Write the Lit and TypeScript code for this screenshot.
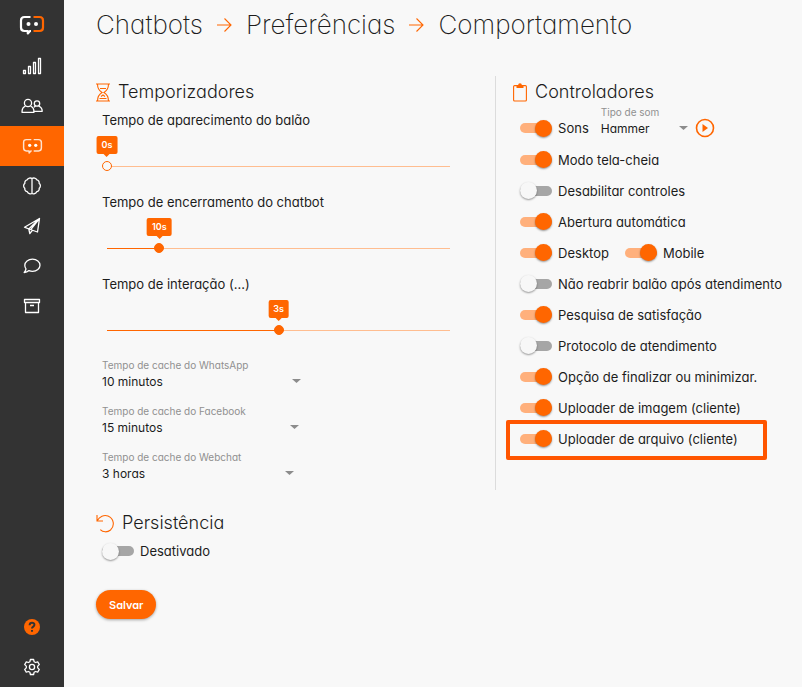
import { LitElement, html, svg, css } from "lit";
import { customElement, property } from "lit/decorators.js";
import { classMap } from "lit/directives/class-map.js";
import { styleMap } from "lit/directives/style-map.js";

const bot = svg`
  <path d="M11.500 2H5.500Q2 2 2 5.500V12.500Q2 16 5.500 16H8.800V18.500L11 16H12"/>
  <path class="half" d="M14.500 2H20.500Q24 2 24 5.500V12.500Q24 16 20.500 16H14.500"/>
  <circle class="eye" cx="9.500" cy="9" r="2"/><circle class="eye" cx="17" cy="9" r="2"/>`;

const logo = html`<svg class="logo" width="26" height="21" viewBox="0 0 26 21" aria-hidden="true">${bot}</svg>`;

const icons = {
  stats: html`<svg width="20" height="18" viewBox="0 0 20 18" aria-hidden="true">
    <path d="M1.500 13.500h2v3h-2zM6.500 9.500h2v7h-2zM11.500 5.500h2v11h-2zM16.500 1.500h2v15h-2z"/></svg>`,
  people: html`<svg width="22" height="16" viewBox="0 0 22 16" aria-hidden="true">
    <circle cx="7" cy="5" r="3.600"/><path d="M4.500 8.200C2 9 1 11 1 14.300H13C13 11 12 9 9.500 8.200"/>
    <circle cx="16" cy="5.500" r="2.700"/><path d="M13 9.200L14.500 8M12.500 13.300H21.200C21.200 10.500 20 8.900 17.800 8.100"/></svg>`,
  bot: html`<svg class="small-bot" width="21" height="17" viewBox="0 0 26 21" aria-hidden="true">${bot}</svg>`,
  brain: html`<svg width="20" height="18" viewBox="0 0 20 18" aria-hidden="true">
    <path d="M10 1.500V16.500M10 1.500C8.500.6 6 1 5.200 2.800C3.500 3 2.500 4.800 2.900 6.200C1.200 7.500 1.200 10 2.800 11.300C2.500 13 3.800 14.500 5.300 14.700C6.200 16.800 8.500 17.300 10 16.500C11.500 17.300 13.800 16.800 14.700 14.700C16.200 14.500 17.500 13 17.200 11.300C18.800 10 18.800 7.500 17.100 6.200C17.500 4.800 16.500 3 14.800 2.800C14 1 11.500.6 10 1.500Z"/></svg>`,
  plane: html`<svg width="18" height="18" viewBox="0 0 18 18" aria-hidden="true">
    <path d="M16.500 1.500L1.500 10.200L5.800 12L14.500 15L16.500 1.500ZM16.500 1.500L5.800 12L6.800 16.500L9.400 13.300M16.500 1.500L7.700 12.700"/></svg>`,
  chat: html`<svg width="18" height="16" viewBox="0 0 18 16" aria-hidden="true">
    <path d="M9.500 1.200C13.800 1.200 17 3.900 17 7.300S13.800 13.300 9.500 13.300C8.200 13.300 7 13 6 12.600C4.700 13.800 3 14.500 1.200 14.500C2.200 13.400 2.900 12.200 3 10.900C2.200 9.900 1.800 8.700 1.800 7.300C1.800 3.900 5.200 1.200 9.500 1.200Z"/></svg>`,
  archive: html`<svg width="18" height="16" viewBox="0 0 18 16" aria-hidden="true">
    <path d="M1.500 1.500H16.500V4.500H1.500ZM2.500 4.500V14.500H15.500V4.500M7 7.500H11"/></svg>`,
  help: html`<svg class="help" width="16" height="16" viewBox="0 0 16 16" aria-hidden="true">
    <circle cx="8" cy="8" r="8"/><path d="M5.600 6.200C5.700 3 10.600 3.100 10.400 6C10.300 7.600 8 7.600 8 9.400M8 11V12.800"/></svg>`,
  gear: html`<svg width="18" height="18" viewBox="0 0 18 18" aria-hidden="true">
    <circle cx="9" cy="9" r="2.600"/>
    <path d="M7.400 1.500H10.600L11.100 3.700L12.600 4.500L14.700 3.800L16.300 6.600L14.700 8.100V9.900L16.300 11.400L14.700 14.200L12.600 13.500L11.100 14.300L10.600 16.500H7.400L6.900 14.300L5.400 13.500L3.300 14.200L1.700 11.400L3.300 9.900V8.100L1.700 6.600L3.300 3.800L5.400 4.500L6.900 3.700Z"/></svg>`,
};

const arrowIcon = html`<svg class="line" width="15" height="16" viewBox="0 0 15 16" aria-hidden="true"><path d="M0 8H14M7.500 1.500L14 8L7.500 14.500"/></svg>`;
const hourglass = html`<svg class="line" width="14" height="19" viewBox="0 0 14 19" aria-hidden="true">
  <path d="M0 1H14M0 18H14M1.500 1C1.500 6 3.500 8 6 9.500C3.500 11 1.500 13 1.500 18M12.500 1C12.500 6 10.500 8 8 9.500C10.500 11 12.500 13 12.500 18M4 5.500H10M3.500 15.500H10.500M5 13.500L7 12L9 13.500"/></svg>`;
const clipboard = html`<svg class="line" width="14" height="19" viewBox="0 0 14 19" aria-hidden="true">
  <rect x="0.600" y="2.600" width="12.800" height="15.400" rx="1"/><path class="solid" d="M3.500 5V2.500H5Q5.200.3 7 .3T9 2.500H10.500V5Z"/></svg>`;
const undo = html`<svg class="line" width="18" height="19" viewBox="0 0 18 19" aria-hidden="true">
  <path d="M1 1V7H7M1 7C3.500 2.500 8 .5 12 2C18 4.500 19 12 14.500 16C11.500 18.500 7 18.500 4.300 15.600"/></svg>`;

const sharedText = css`
  :host {
    --accent: #ff6600;
    --ink: #1c1c1c;
  }
  label {
    color: var(--ink);
  }
`;

@customElement("toggle-switch")
class ToggleSwitch extends LitElement {
  @property() label = "";
  @property({ type: Boolean }) on = false;

  static styles = [
    sharedText,
    css`
      :host {
        display: flex;
      }
      .toggle {
        display: flex;
        align-items: center;
        gap: 6px;
        height: 24px;
        font-size: 13px;
        white-space: nowrap;
      }
      .box {
        appearance: none;
        display: grid;
        align-items: center;
        width: 32px;
        height: 18px;
        margin: 0;
        cursor: pointer;
      }
      .box::before,
      .box::after {
        content: "";
        grid-area: 1 / 1;
      }
      .box::before {
        height: 10px;
        border-radius: 5px;
        background: #a6a6a6;
      }
      .box::after {
        width: 17px;
        height: 17px;
        border-radius: 50%;
        background: #f7f7f7;
        box-shadow: 0 1px 2px rgb(0 0 0 / 40%);
      }
      .box:checked::before {
        background: #ffb07c;
      }
      .box:checked::after {
        justify-self: end;
        background: var(--accent);
      }
    `,
  ];

  render() {
    return html`<label class="toggle"><input class="box" type="checkbox" .checked=${this.on} />${this.label}</label>`;
  }
}

@customElement("time-slider")
class TimeSlider extends LitElement {
  @property() label = "";
  @property({ type: Number }) min = 0;
  @property({ type: Number }) max = 60;
  @property({ type: Number }) value = 0;

  static styles = [
    sharedText,
    css`
      :host {
        display: block;
      }
      .name {
        display: block;
        font-size: 13px;
        line-height: 24px;
      }
      .rail {
        position: relative;
        margin: 0 5px;
        padding: 26px 0 16px;
      }
      .line {
        height: 16px;
        margin: 0 -5px;
      }
      .range {
        appearance: none;
        display: block;
        width: 100%;
        height: 16px;
        margin: 0;
        background: none;
        cursor: pointer;
      }
      .range::-webkit-slider-runnable-track {
        height: 10px;
        background:
          linear-gradient(var(--accent), var(--accent)) 5px 5px / calc((100% - 10px) * var(--part)) 1px no-repeat,
          linear-gradient(#ffbd90, #ffbd90) 5px 5px / calc(100% - 10px) 1px no-repeat;
      }
      .range::-webkit-slider-thumb {
        appearance: none;
        width: 10px;
        height: 10px;
        border: 1px solid var(--accent);
        border-radius: 50%;
        background: var(--accent);
      }
      .empty::-webkit-slider-thumb {
        background: #f8f8f8;
      }
      .bubble {
        position: absolute;
        top: 4px;
        left: calc(100% * var(--part));
        min-width: 9px;
        padding: 0 5px;
        transform: translateX(-50%);
        border-radius: 2px;
        background: var(--accent);
        color: #fff;
        font-size: 9px;
        font-weight: 600;
        line-height: 18px;
        text-align: center;
      }
      .bubble::after {
        content: "";
        position: absolute;
        top: 100%;
        left: calc(50% - 3px);
        border: 3px solid transparent;
        border-top-color: var(--accent);
        border-bottom: 0;
      }
    `,
  ];

  render() {
    const part = (this.value - this.min) / (this.max - this.min);
    return html`
      <label class="name" for="range">${this.label}</label>
      <div class="rail" style=${styleMap({ "--part": String(part) })}>
        <output class="bubble" for="range">${this.value}s</output>
        <div class="line">
          <input
            id="range"
            class=${classMap({ range: true, empty: part === 0 })}
            type="range"
            min=${this.min}
            max=${this.max}
            .value=${String(this.value)}
            @input=${(e: Event) => (this.value = Number((e.target as HTMLInputElement).value))}
          />
        </div>
      </div>
    `;
  }
}

@customElement("select-field")
class SelectField extends LitElement {
  @property() label = "";
  @property({ attribute: false }) options: string[] = [];
  @property({ type: Boolean, reflect: true }) compact = false;

  static styles = [
    sharedText,
    css`
      :host {
        display: grid;
        width: fit-content;
      }
      .name {
        padding-right: 53px;
        color: #909090;
        font-size: 10px;
        line-height: 16px;
        white-space: nowrap;
      }
      :host([compact]) .name {
        padding-right: 29px;
      }
      .control {
        display: grid;
        align-items: center;
        margin-top: -4px;
      }
      .value {
        grid-area: 1 / 1;
        appearance: none;
        width: 100%;
        height: 24px;
        padding: 0;
        border: 0;
        background: none;
        color: var(--ink);
        font: inherit;
        font-size: 12px;
      }
      .caret {
        grid-area: 1 / 1;
        justify-self: end;
        fill: #8c8c8c;
        pointer-events: none;
      }
    `,
  ];

  render() {
    return html`
      <label class="name" for="value">${this.label}</label>
      <div class="control">
        <select id="value" class="value">
          ${this.options.map((o) => html`<option>${o}</option>`)}
        </select>
        <svg class="caret" width="9" height="4" viewBox="0 0 9 4" aria-hidden="true"><path d="M0 0H9L4.500 4Z" /></svg>
      </div>
    `;
  }
}

@customElement("app-root")
class AppRoot extends LitElement {
  static styles = [
    sharedText,
    css`
      :host {
        display: flex;
        min-height: 100vh;
        background: #f8f8f8;
        color: var(--ink);
        font-family: Inter, "Open Sans", sans-serif;
        font-feature-settings: "cv11";
        font-weight: 400;
      }
      .sidebar {
        display: flex;
        flex: 0 0 64px;
        flex-direction: column;
        background: #333;
      }
      .item {
        display: flex;
        align-items: center;
        justify-content: center;
        height: 40px;
        fill: none;
        stroke: #fff;
        stroke-width: 1.3;
        stroke-linejoin: round;
      }
      .brand {
        height: 46px;
        padding-top: 4px;
        box-sizing: border-box;
      }
      .active {
        background: var(--accent);
      }
      .spacer {
        flex: 1;
      }
      .logo {
        stroke-width: 2.2;
      }
      .logo .half {
        stroke: var(--accent);
      }
      .eye {
        fill: #fff;
        stroke: none;
      }
      .small-bot {
        stroke: #ffe3d0;
        stroke-width: 1.8;
      }
      .help {
        fill: var(--accent);
        stroke: none;
      }
      .help path {
        fill: none;
        stroke: #333;
        stroke-width: 2;
      }
      .line {
        flex: none;
        fill: none;
        stroke: var(--accent);
        stroke-width: 1.1;
      }
      .line .solid {
        fill: var(--accent);
        stroke: none;
      }
      main {
        flex: 1;
        min-width: 0;
        padding: 0 0 32px 32px;
      }
      h1 {
        display: flex;
        align-items: center;
        gap: 14px;
        margin: 0 0 26px;
        font-size: 26px;
        font-weight: 200;
        line-height: 50px;
      }
      h2 {
        display: flex;
        align-items: center;
        gap: 8px;
        margin: 0;
        font-size: 18px;
        font-weight: 300;
        line-height: 32px;
      }
      .columns {
        display: grid;
        grid-template-columns: 17fr 13fr;
        margin-bottom: 17px;
      }
      .timers {
        padding: 0 40px 5px 0;
        border-right: 1px solid #dcdcdc;
      }
      .timers .body {
        padding-left: 6px;
      }
      .caches {
        display: grid;
        gap: 10px;
        padding-top: 3px;
      }
      .controllers {
        padding-left: 17px;
      }
      .rows {
        padding-left: 7px;
      }
      .row {
        display: flex;
        align-items: center;
        gap: 16px;
        width: fit-content;
        height: 31px;
      }
      .sound {
        align-items: flex-end;
        gap: 12px;
        height: 32px;
        padding-bottom: 4px;
      }
      .tuned {
        display: flex;
        align-items: flex-end;
        gap: 7px;
        margin-top: -4px;
      }
      .play {
        display: flex;
        align-items: center;
        height: 24px;
        padding: 0;
        border: 0;
        background: none;
        cursor: pointer;
      }
      .play svg {
        fill: none;
        stroke: var(--accent);
        stroke-width: 1.6;
      }
      .play .solid {
        fill: var(--accent);
        stroke: none;
      }
      .highlighted {
        position: relative;
      }
      .highlighted::after {
        content: "";
        position: absolute;
        inset: -3px -29px -6px -14px;
        border: 4px solid #ff5500;
        border-radius: 2px;
        pointer-events: none;
      }
      .persistence {
        padding-left: 6px;
      }
      .save {
        height: 29px;
        margin-top: 27px;
        padding: 0 13px;
        border: 0;
        border-radius: 15px;
        background: var(--accent);
        box-shadow: 0 1px 3px rgb(0 0 0 / 35%);
        color: #fff;
        font: inherit;
        font-size: 11px;
        font-weight: 600;
        cursor: pointer;
      }
    `,
  ];

  private nav(name: keyof typeof icons, title: string, active = false) {
    return html`<a class=${classMap({ item: true, active })} href="#${name}" aria-label=${title}>${icons[name]}</a>`;
  }

  private rows: { label: string; on: boolean }[][] = [
    [{ label: "Modo tela-cheia", on: true }],
    [{ label: "Desabilitar controles", on: false }],
    [{ label: "Abertura automática", on: true }],
    [{ label: "Desktop", on: true }, { label: "Mobile", on: true }],
    [{ label: "Não reabrir balão após atendimento", on: false }],
    [{ label: "Pesquisa de satisfação", on: true }],
    [{ label: "Protocolo de atendimento", on: false }],
    [{ label: "Opção de finalizar ou minimizar.", on: true }],
    [{ label: "Uploader de imagem (cliente)", on: true }],
    [{ label: "Uploader de arquivo (cliente)", on: true }],
  ];

  render() {
    const last = this.rows.length - 1;
    return html`
      <nav class="sidebar">
        <a class="item brand" href="#home" aria-label="Início">${logo}</a>
        ${this.nav("stats", "Estatísticas")} ${this.nav("people", "Usuários")} ${this.nav("bot", "Chatbots", true)}
        ${this.nav("brain", "Inteligência")} ${this.nav("plane", "Campanhas")} ${this.nav("chat", "Conversas")}
        ${this.nav("archive", "Arquivo")}
        <div class="spacer"></div>
        ${this.nav("help", "Ajuda")} ${this.nav("gear", "Configurações")}
      </nav>
      <main>
        <h1><span>Chatbots</span>${arrowIcon}<span>Preferências</span>${arrowIcon}<span>Comportamento</span></h1>
        <div class="columns">
          <section class="timers">
            <h2>${hourglass}Temporizadores</h2>
            <div class="body">
              <time-slider label="Tempo de aparecimento do balão" min="0" max="60" value="0"></time-slider>
              <time-slider label="Tempo de encerramento do chatbot" min="1" max="60" value="10"></time-slider>
              <time-slider label="Tempo de interação (...)" min="1" max="5" value="3"></time-slider>
              <div class="caches">
                <select-field label="Tempo de cache do WhatsApp" .options=${["10 minutos", "15 minutos", "3 horas"]}></select-field>
                <select-field label="Tempo de cache do Facebook" .options=${["15 minutos", "10 minutos", "3 horas"]}></select-field>
                <select-field label="Tempo de cache do Webchat" .options=${["3 horas", "10 minutos", "15 minutos"]}></select-field>
              </div>
            </div>
          </section>
          <section class="controllers">
            <h2>${clipboard}Controladores</h2>
            <div class="rows">
              <div class="row sound">
                <toggle-switch label="Sons" on></toggle-switch>
                <div class="tuned">
                  <select-field compact label="Tipo de som" .options=${["Hammer"]}></select-field>
                  <button class="play" aria-label="Ouvir som">
                    <svg width="20" height="20" viewBox="0 0 20 20" aria-hidden="true"><circle cx="10" cy="10" r="8.500" /><path class="solid" d="M7.500 6V14L13 10Z" /></svg>
                  </button>
                </div>
              </div>
              ${this.rows.map(
                (row, i) => html`<div class=${classMap({ row: true, highlighted: i === last })}>
                  ${row.map((t) => html`<toggle-switch label=${t.label} ?on=${t.on}></toggle-switch>`)}
                </div>`
              )}
            </div>
          </section>
        </div>
        <section>
          <h2>${undo}Persistência</h2>
          <toggle-switch class="persistence" label="Desativado"></toggle-switch>
        </section>
        <button class="save">Salvar</button>
      </main>
    `;
  }
}
